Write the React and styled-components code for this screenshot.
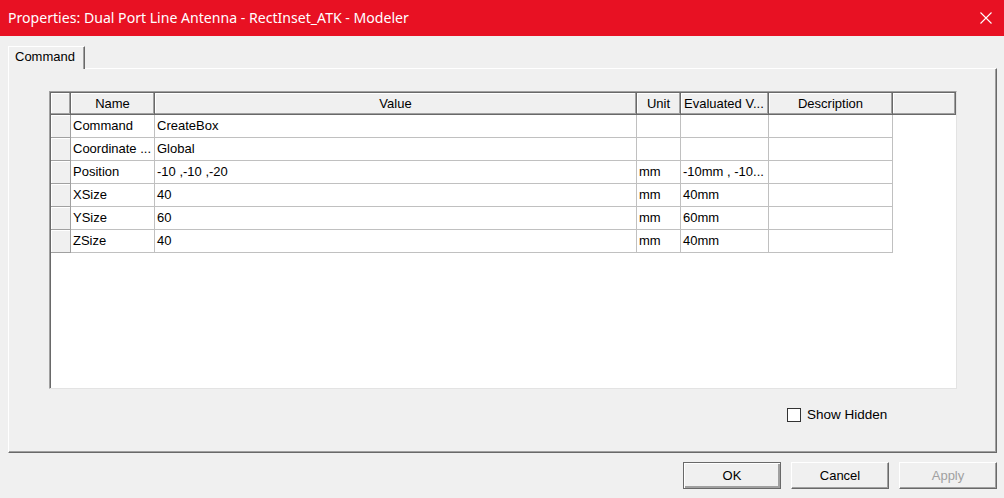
import styled, { createGlobalStyle } from "styled-components";

const GlobalStyle = createGlobalStyle`
  html, body {
    margin: 0;
    padding: 0;
    background: #f0f0f0;
  }
  body {
    font-family: "Liberation Sans", Arial, sans-serif;
    font-size: 13px;
    color: #000;
  }
`;

const COLS = [
  { key: "head", width: 20 },
  { key: "name", label: "Name", width: 84 },
  { key: "value", label: "Value", width: 482 },
  { key: "unit", label: "Unit", width: 44 },
  { key: "evaluated", label: "Evaluated V...", width: 88, left: true },
  { key: "description", label: "Description", width: 124 },
  { key: "extra", label: "", width: 63 },
];

const ROWS = [
  { name: "Command", value: "CreateBox", unit: "", evaluated: "" },
  { name: "Coordinate ...", value: "Global", unit: "", evaluated: "" },
  { name: "Position", value: "-10 ,-10 ,-20", unit: "mm", evaluated: "-10mm , -10..." },
  { name: "XSize", value: "40", unit: "mm", evaluated: "40mm" },
  { name: "YSize", value: "60", unit: "mm", evaluated: "60mm" },
  { name: "ZSize", value: "40", unit: "mm", evaluated: "40mm" },
];

const App = () => {
  return (
    <Window>
      <GlobalStyle />
      <TitleBar>
        <Title>Properties: Dual Port Line Antenna - RectInset_ATK - Modeler</Title>
        <CloseButton>
          <svg width="12" height="12" viewBox="0 0 12 12">
            <path d="M0.5 0.5 L11.5 11.5 M11.5 0.5 L0.5 11.5" stroke="#fff" strokeWidth="1.1" />
          </svg>
        </CloseButton>
      </TitleBar>
      <Content>
        <TabStrip>
          <Tab>Command</Tab>
        </TabStrip>
        <Panel>
          <Grid>
            <HeaderRow>
              {COLS.map((c) => (
                <HeaderCell key={c.key} $width={c.width} $left={c.left}>
                  {c.label}
                </HeaderCell>
              ))}
            </HeaderRow>
            {ROWS.map((r) => (
              <Row key={r.name}>
                <RowHead />
                <Cell $width={84}>{r.name}</Cell>
                <Cell $width={482}>{r.value}</Cell>
                <Cell $width={44}>{r.unit}</Cell>
                <Cell $width={88}>{r.evaluated}</Cell>
                <Cell $width={124} />
              </Row>
            ))}
          </Grid>
          <OptionRow>
            <CheckBox />
            <OptionLabel>Show Hidden</OptionLabel>
          </OptionRow>
        </Panel>
        <ButtonRow>
          <Button $default>OK</Button>
          <Button>Cancel</Button>
          <Button disabled>Apply</Button>
        </ButtonRow>
      </Content>
    </Window>
  );
};

const Window = styled.div`
  width: 1004px;
  height: 498px;
  background: #f0f0f0;
  overflow: hidden;
`;

const TitleBar = styled.div`
  height: 36px;
  background: #e81123;
  display: flex;
  align-items: center;
  justify-content: space-between;
  padding-left: 8px;
  color: #fff;
`;

const Title = styled.div`
  font-family: "Noto Sans", "Open Sans", sans-serif;
  font-size: 14.1px;
  margin-top: -1px;
`;

const CloseButton = styled.div`
  width: 46px;
  height: 36px;
  display: flex;
  align-items: center;
  justify-content: center;
  margin-right: -5px;
`;

const Content = styled.div`
  padding: 10px 7px 0 8px;
`;

const TabStrip = styled.div`
  display: flex;
  height: 22px;
`;

const Tab = styled.div`
  box-sizing: border-box;
  padding: 1px 6px 0 6px;
  width: 77px;
  height: 23px;
  background: #f0f0f0;
  border-top: 1px solid #fff;
  border-left: 1px solid #fff;
  border-right: 1px solid #696969;
  box-shadow: inset -1px 0 #a0a0a0;
  line-height: 18px;
  position: relative;
  z-index: 1;
  margin-bottom: -1px;
`;

const Panel = styled.div`
  height: 385px;
  box-sizing: border-box;
  border-top: 1px solid #fff;
  border-left: 1px solid #fff;
  border-right: 1px solid #696969;
  border-bottom: 1px solid #696969;
  box-shadow: inset -1px -1px #a0a0a0;
  padding: 22px 0 0 40px;
`;

const Grid = styled.div`
  width: 908px;
  height: 298px;
  box-sizing: border-box;
  background: #fff;
  border-top: 1px solid #a0a0a0;
  border-left: 1px solid #a0a0a0;
  border-right: 1px solid #e3e3e3;
  border-bottom: 1px solid #e3e3e3;
  box-shadow: inset 1px 1px #696969;
  padding: 1px 0 0 1px;
`;

const HeaderRow = styled.div`
  display: flex;
  height: 22px;
`;

const HeaderCell = styled.div`
  width: ${(p) => p.$width}px;
  flex: none;
  box-sizing: border-box;
  background: #f0f0f0;
  border-right: 1px solid #696969;
  border-bottom: 1px solid #696969;
  box-shadow: inset -1px -1px #a0a0a0, inset 1px 1px #fff;
  text-align: ${(p) => (p.$left ? "left" : "center")};
  padding-left: ${(p) => (p.$left ? "3px" : "0")};
  line-height: 21px;
  white-space: nowrap;
  overflow: hidden;
`;

const Row = styled.div`
  display: flex;
  height: 23px;
`;

const RowHead = styled.div`
  width: 20px;
  flex: none;
  box-sizing: border-box;
  background: #f0f0f0;
  border-right: 1px solid #a0a0a0;
  border-bottom: 1px solid #a0a0a0;
  box-shadow: inset 1px 1px #fff;
`;

const Cell = styled.div`
  width: ${(p) => p.$width}px;
  flex: none;
  box-sizing: border-box;
  border-right: 1px solid #c0c0c0;
  border-bottom: 1px solid #c0c0c0;
  padding-left: 2px;
  line-height: 22px;
  white-space: nowrap;
  overflow: hidden;
`;

const OptionRow = styled.div`
  display: flex;
  align-items: center;
  gap: 6px;
  margin: 18px 0 0 738px;
`;

const CheckBox = styled.div`
  width: 14px;
  height: 14px;
  box-sizing: border-box;
  border: 1px solid #333;
  background: #fff;
`;

const OptionLabel = styled.span`
  font-size: 13.5px;
`;

const ButtonRow = styled.div`
  display: flex;
  justify-content: flex-end;
  gap: 10px;
  margin-top: 9px;
`;

const Button = styled.button`
  width: 98px;
  height: 27px;
  box-sizing: border-box;
  background: #f0f0f0;
  font-family: "Liberation Sans", Arial, sans-serif;
  font-size: 13px;
  color: ${(p) => (p.disabled ? "#a0a0a0" : "#000")};
  padding: 0;
  border: 1px solid ${(p) => (p.$default ? "#696969" : "transparent")};
  border-top-color: ${(p) => (p.$default ? "#696969" : "#fff")};
  border-left-color: ${(p) => (p.$default ? "#696969" : "#fff")};
  border-right-color: #696969;
  border-bottom-color: #696969;
  box-shadow: ${(p) =>
    p.$default
      ? "inset 1px 1px #fff, inset -2px -2px #a0a0a0"
      : "inset -1px -1px #a0a0a0"};
`;

export default App;
